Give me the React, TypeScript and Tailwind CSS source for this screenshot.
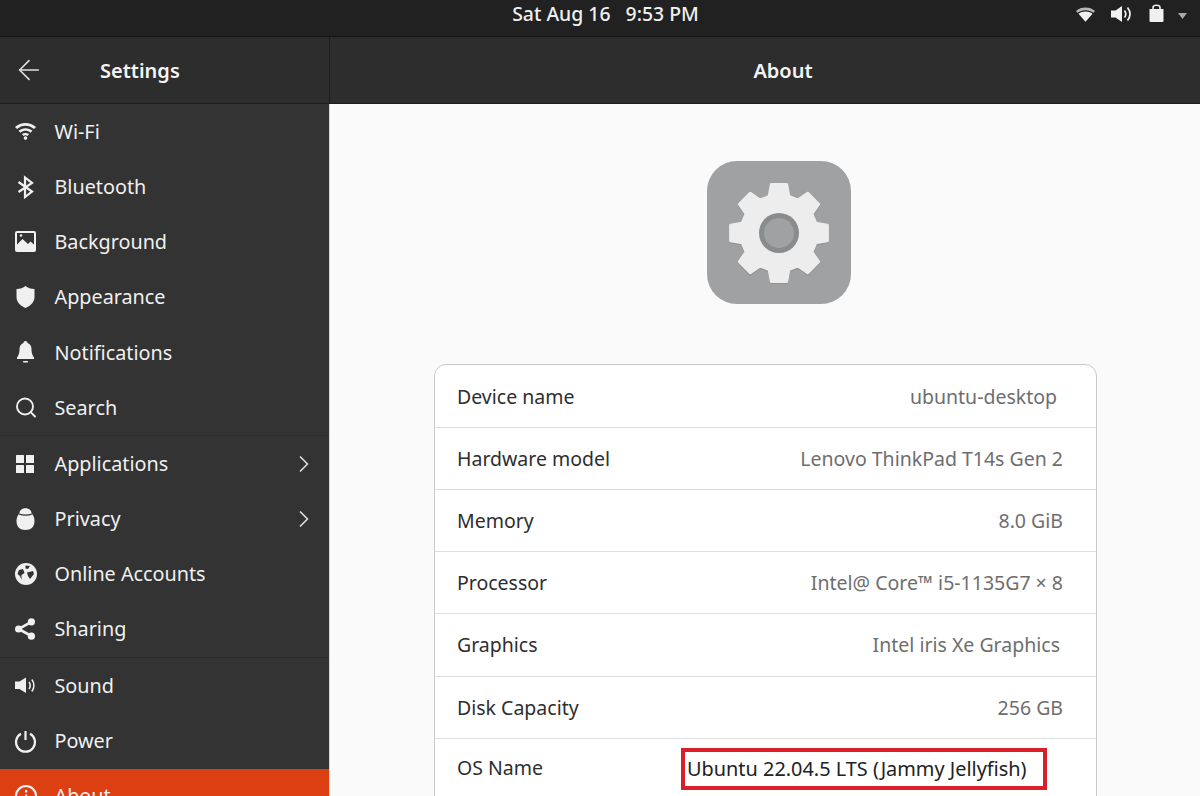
import React from "react";
import { ArrowLeft, ChevronRight, Search } from "lucide-react";

const font = "font-['Noto_Sans',sans-serif]";

const I = ({ children }: { children: React.ReactNode }) => (
  <svg width="24" height="24" viewBox="0 0 24 24" fill="#f0f0f0">{children}</svg>
);

const WifiI = () => (
  <I>
    <g transform="translate(-0.5 -1.5)">
      <path d="M1.5 8.5 C7.5 3 16.5 3 22.5 8.5 L20.5 10.5 C15.5 6 8.5 6 3.5 10.5Z" />
      <path d="M5 12.2 C9 8.8 15 8.8 19 12.2 L17 14.2 C14 11.6 10 11.6 7 14.2Z" />
      <path d="M8.4 15.6 C10.6 14 13.4 14 15.6 15.6 L13.9 17.4 C12.7 16.6 11.3 16.6 10.1 17.4Z" />
      <circle cx="12" cy="19.6" r="1.8" />
    </g>
  </I>
);
const BtI = () => (
  <I>
    <path d="M4.5 7 L18 16.5 L11 22 V2.5 L18 8 L4.5 17" fill="none" stroke="#f0f0f0" strokeWidth="2.2" />
  </I>
);
const BgI = () => (
  <I>
    <path fillRule="evenodd" d="M3 1 H20 A2 2 0 0 1 22 3 V20 A2 2 0 0 1 20 22 H3 A2 2 0 0 1 1 20 V3 A2 2 0 0 1 3 1Z M3 3 V14.5 L8.5 9 L14 14 L16.5 11.5 L20 14.5 V3Z" />
    <circle cx="7" cy="5.5" r="1.2" />
  </I>
);
const ShieldI = () => (
  <I>
    <path d="M11.5 1 C14 3 16.5 3.8 20.5 4 V12 C20.5 17 17 20.5 11.5 23 C6 20.5 2.5 17 2.5 12 V4 C6.5 3.8 9 3 11.5 1Z" />
  </I>
);
const BellI = () => (
  <I>
    <path d="M11.5 1 C12.7 1 13.5 1.8 13.5 3 C16.5 4 17.5 6.5 17.5 9.5 C17.5 13 18.5 15.5 20 17.5 V19 H3 V17.5 C4.5 15.5 5.5 13 5.5 9.5 C5.5 6.5 6.5 4 9.5 3 C9.5 1.8 10.3 1 11.5 1Z" />
    <rect x="9" y="21" width="5" height="1.6" rx=".7" />
  </I>
);
const AppsI = () => (
  <I>
    <rect x="2" y="3" width="8" height="8" rx=".5" />
    <rect x="12" y="3" width="8" height="8" rx=".5" />
    <rect x="2" y="13" width="8" height="8" rx=".5" />
    <rect x="12" y="13" width="8" height="8" rx=".5" />
  </I>
);
const PrivacyI = () => (
  <I>
    <path d="M5.5 6 C5.5 -0.5 17.5 -0.5 17.5 6 C19.5 8.5 20.5 11 20.5 14 C20.5 20 17 23 11.5 23 C6 23 2.5 20 2.5 14 C2.5 11 3.5 8.5 5.5 6Z" />
    <path d="M5 7 C8.5 8.6 14.5 8.6 18 7" fill="none" stroke="#333" strokeWidth="1.3" />
  </I>
);
const GlobeI = () => (
  <I>
    <circle cx="12" cy="12" r="11" />
    <path d="M5 8 L9 7 L10.5 11 L7.5 13 L7.5 18 L6 14 L3.5 12Z M11.5 3.5 L16 4 L14 7 L11.5 6.5Z M13 10.5 L19 9 L20 12 L16 17 L14 14Z" fill="#333" />
  </I>
);
const ShareI = () => (
  <I>
    <path d="M17.4 4.8 L4.6 12 L17.4 19" fill="none" stroke="#f0f0f0" strokeWidth="2.6" />
    <circle cx="17.4" cy="4.8" r="3.6" />
    <circle cx="17.4" cy="19.2" r="3.6" />
    <circle cx="4.6" cy="12" r="3.6" />
  </I>
);
const SoundI = () => (
  <I>
    <path d="M1 8.5 H5.5 L12 4.5 V20 L5.5 16 H1Z" />
    <path d="M15 9 C16.4 11 16.4 14 15 16 M17.8 6.5 C20.6 10 20.6 15 17.8 18.5" fill="none" stroke="#f0f0f0" strokeWidth="1.5" />
  </I>
);
const PowerI = () => (
  <I>
    <path d="M11.5 2 V11" fill="none" stroke="#f0f0f0" strokeWidth="2.2" />
    <path d="M7 4.8 A9.5 9.5 0 1 0 16 4.8" fill="none" stroke="#f0f0f0" strokeWidth="2.2" />
  </I>
);
const InfoI = () => (
  <I>
    <circle cx="12" cy="12" r="10" fill="none" stroke="#f0f0f0" strokeWidth="2.2" />
    <rect x="11" y="6" width="2.2" height="2.5" />
    <rect x="11" y="10.5" width="2.2" height="7" />
  </I>
);

function gearPath() {
  const pts: string[] = [];
  const cx = 52;
  const cy = 52;
  const P = (r: number, a: number) => {
    const t = (a * Math.PI) / 180;
    return `${(cx + r * Math.sin(t)).toFixed(2)} ${(cy - r * Math.cos(t)).toFixed(2)}`;
  };
  for (let i = 0; i < 8; i++) {
    const a = i * 45;
    pts.push(P(38, a - 15), P(49, a - 9), P(49, a + 9), P(38, a + 15));
  }
  return "M" + pts.join(" L") + "Z";
}

type Item = { label: string; icon: React.ReactNode; arrow?: boolean };

const g1: Item[] = [
  { label: "Wi-Fi", icon: <WifiI /> },
  { label: "Bluetooth", icon: <BtI /> },
  { label: "Background", icon: <BgI /> },
  { label: "Appearance", icon: <ShieldI /> },
  { label: "Notifications", icon: <BellI /> },
  { label: "Search", icon: <Search size={25} strokeWidth={1.9} color="#f0f0f0" /> },
];
const g2: Item[] = [
  { label: "Applications", icon: <AppsI />, arrow: true },
  { label: "Privacy", icon: <PrivacyI />, arrow: true },
  { label: "Online Accounts", icon: <GlobeI /> },
  { label: "Sharing", icon: <ShareI /> },
];
const g3: Item[] = [
  { label: "Sound", icon: <SoundI /> },
  { label: "Power", icon: <PowerI /> },
];

const Row = ({ item }: { item: Item }) => (
  <div className="h-[55.2px] flex items-center pl-[14px] pr-[11px] text-[#f0f0f0] text-[19.8px]">
    <span className="w-[24px] h-[24px] flex items-center justify-center">{item.icon}</span>
    <span className="ml-[16.5px] flex-1">{item.label}</span>
    {item.arrow && <ChevronRight size={28} color="#dcdcdc" strokeWidth={1.5} />}
  </div>
);

const details = [
  ["Device name", "ubuntu-desktop", "pr-[6px]"],
  ["Hardware model", "Lenovo ThinkPad T14s Gen 2", ""],
  ["Memory", "8.0 GiB", ""],
  ["Processor", "Intel@ Core™ i5-1135G7 × 8", ""],
  ["Graphics", "Intel iris Xe Graphics", "pr-[3px]"],
  ["Disk Capacity", "256 GB", ""],
];

export default function App() {
  return (
    <div className={`w-[1200px] h-[796px] overflow-hidden flex flex-col ${font} bg-[#fafafa]`}>
      <div className="h-[37px] shrink-0 bg-[#212121] border-b border-[#151515] flex items-center relative text-[#f0f0f0]">
        <div className="flex-1 text-center text-[19.4px] font-medium pl-[11px] pb-[8px] whitespace-pre">Sat Aug 16   9:53 PM</div>
        <div className="absolute right-[13px] top-[5px] h-[18px] flex items-center">
          <svg width="19" height="15" viewBox="0 0 20 15" fill="#f0f0f0">
            <path d="M0 3.8 C5.5 -1 14.5 -1 20 3.8 L18.5 5.6 C13.5 2 6.5 2 1.5 5.6Z" fill="#b8b8b8" />
            <path d="M2.6 6.8 C7 3.5 13 3.5 17.4 6.8 L10 15Z" />
          </svg>
          <svg width="20" height="16" viewBox="1 4 20 16" fill="#f0f0f0" className="ml-[16px]">
            <path d="M1 8.5 H5.5 L12 4 V20 L5.5 15.5 H1Z" />
            <path d="M14.5 8.5 C16 10.5 16 13.5 14.5 15.5 M17.5 5.5 C20.6 9.5 20.6 14.5 17.5 18.5" fill="none" stroke="#f0f0f0" strokeWidth="1.7" />
          </svg>
          <svg width="15" height="18" viewBox="0 0 15 18" fill="#f0f0f0" className="ml-[18px] -mt-[2px]">
            <path d="M0.5 5 H14.5 V17 A1 1 0 0 1 13.5 18 H1.5 A1 1 0 0 1 0.5 17Z" />
            <path d="M4 5 V3.5 C4 0.5 11 0.5 11 3.5 V5" fill="none" stroke="#f0f0f0" strokeWidth="1.6" />
          </svg>
          <svg width="9" height="6" viewBox="0 0 9 6" fill="#a8a8a8" className="ml-[14px] mt-[4px]"><path d="M0 0 H9 L4.5 6Z" /></svg>
        </div>
      </div>
      <div className="h-[67px] shrink-0 flex bg-[#2d2d2d] border-b border-[#1e1e1e]">
        <div className="w-[330px] shrink-0 border-r border-[#1e1e1e] flex items-center relative text-[#f4f4f4]">
          <ArrowLeft size={32} className="ml-[13px]" color="#e0e0e0" strokeWidth={1.2} />
          <span className="absolute left-[100px] top-[19px] text-[20px] font-semibold">Settings</span>
        </div>
        <div className="flex-1 flex items-center justify-center text-[#f4f4f4] text-[20px] font-semibold pl-[36px] pt-[2px]">About</div>
      </div>
      <div className="flex-1 flex min-h-0">
        <div className="w-[330px] shrink-0 bg-[#333333] flex flex-col overflow-hidden border-r border-[#d8d8d8]">
          <div>{g1.map((i) => <Row key={i.label} item={i} />)}</div>
          <div className="h-px shrink-0 bg-[#2a2a2a]" />
          <div>{g2.map((i) => <Row key={i.label} item={i} />)}</div>
          <div className="h-px shrink-0 bg-[#2a2a2a]" />
          <div>{g3.map((i) => <Row key={i.label} item={i} />)}</div>
          <div className="bg-[#dc3f12] shrink-0 h-[56px] mt-[0.4px]">
            <Row item={{ label: "About", icon: <InfoI /> }} />
          </div>
        </div>
        <div className="flex-1 flex flex-col items-center pt-[57px] overflow-hidden">
          <div className="w-[144px] h-[143px] shrink-0 rounded-[30px] bg-[#9fa1a2] flex items-center justify-center ml-[28px]">
            <svg width="104" height="104" viewBox="0 0 104 104">
              <path d={gearPath()} fill="#8f9091" stroke="#8f9091" strokeWidth="3" strokeLinejoin="round" transform="translate(0 1.2)" />
              <path d={gearPath()} fill="#ededed" stroke="#ededed" strokeWidth="3" strokeLinejoin="round" />
              <circle cx="52" cy="52" r="20" fill="#8a8b8c" />
              <circle cx="52" cy="52" r="15" fill="#9fa1a2" />
            </svg>
          </div>
          <div className="mt-[60px] w-[663px] shrink-0 ml-[1px] pt-[0.6px] bg-white border border-[#c9c9c9] rounded-t-[12px] text-[19.5px]">
            {details.map(([k, v, p]) => (
              <div key={k} className="h-[62.2px] flex items-center justify-between pl-[22px] pr-[33px] border-b border-[#dedede]">
                <span className="text-[#2e2e2e]">{k}</span>
                <span className={`text-[#6e6e6e] ${p}`}>{v}</span>
              </div>
            ))}
            <div className="h-[62px] flex items-center pl-[22px] pb-[4px] relative">
              <span className="text-[#2e2e2e]">OS Name</span>
              <div className="absolute left-[246px] top-[9px] w-[366px] h-[42px] border-[4px] border-[#d8202a] flex items-center pl-[2px] text-[#222] text-[19.9px]">
                Ubuntu 22.04.5 LTS (Jammy Jellyfish)
              </div>
            </div>
          </div>
        </div>
      </div>
    </div>
  );
}
